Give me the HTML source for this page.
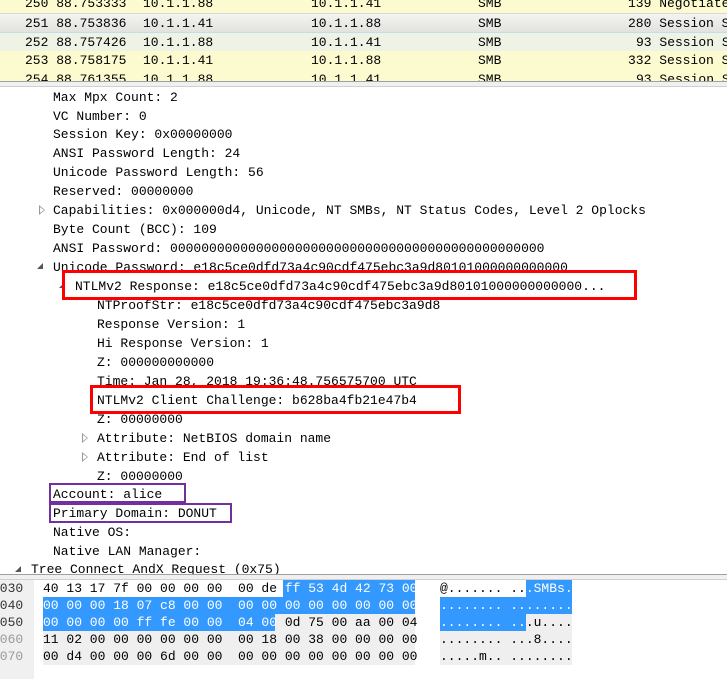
<!DOCTYPE html>
<html><head><meta charset="utf-8"><style>
body{margin:0;width:727px;height:679px;overflow:hidden;background:#fff;font-family:"Liberation Mono",monospace;font-size:13px;color:#000;position:relative}
.r{position:absolute;left:0;width:727px;height:19px;line-height:19px;white-space:pre}
.r span{position:absolute;top:0}
.t{position:absolute;white-space:pre;line-height:19px;height:19px}
.ar{position:absolute;width:0;height:0}
.open{border-left:6px solid transparent;border-bottom:6px solid #555;}
.cl{position:absolute;width:0;height:0;border-top:5px solid transparent;border-bottom:5px solid transparent;border-left:6px solid #999}
.cl:after{content:"";position:absolute;left:-5px;top:-3px;border-top:3px solid transparent;border-bottom:3px solid transparent;border-left:4px solid #fff}
.h{position:absolute;white-space:pre;height:17px;line-height:17px}
.box{position:absolute;box-sizing:border-box}
</style></head><body>
<div class="r" style="top:-6px;background:#fbfbcf"><span style="left:25px">250 88.753333</span><span style="left:143px">10.1.1.88</span><span style="left:311px">10.1.1.41</span><span style="left:478px">SMB</span><span style="left:628px">139 Negotiate</span></div>
<div class="r" style="top:13px;height:18px;background:linear-gradient(#f4f4f2,#e2e2de);border-top:1px solid #d8d8d8"><span style="left:25px">251 88.753836</span><span style="left:143px">10.1.1.41</span><span style="left:311px">10.1.1.88</span><span style="left:478px">SMB</span><span style="left:628px">280 Session S</span></div>
<div class="r" style="top:32px;background:#eef3e6;border-top:1px solid #c8dbe8"><span style="left:25px">252 88.757426</span><span style="left:143px">10.1.1.88</span><span style="left:311px">10.1.1.41</span><span style="left:478px">SMB</span><span style="left:636px">93 Session S</span></div>
<div class="r" style="top:51px;background:#fbfbcf"><span style="left:25px">253 88.758175</span><span style="left:143px">10.1.1.41</span><span style="left:311px">10.1.1.88</span><span style="left:478px">SMB</span><span style="left:628px">332 Session S</span></div>
<div class="r" style="top:70px;height:11px;overflow:hidden;background:#fbfbcf"><span style="left:25px">254 88.761355</span><span style="left:143px">10.1.1.88</span><span style="left:311px">10.1.1.41</span><span style="left:478px">SMB</span><span style="left:636px">93 Session S</span></div>
<div style="position:absolute;top:81px;left:0;width:727px;height:4px;background:#f0f0f0;border-top:1px solid #a0a0a0;border-bottom:1px solid #d0d0d0"></div>

<div class="t" style="left:53px;top:88px">Max Mpx Count: 2</div>
<div class="t" style="left:53px;top:107px">VC Number: 0</div>
<div class="t" style="left:53px;top:125px">Session Key: 0x00000000</div>
<div class="t" style="left:53px;top:144px">ANSI Password Length: 24</div>
<div class="t" style="left:53px;top:163px">Unicode Password Length: 56</div>
<div class="t" style="left:53px;top:182px">Reserved: 00000000</div>
<div class="cl" style="left:39px;top:205px"></div>
<div class="t" style="left:53px;top:201px">Capabilities: 0x000000d4, Unicode, NT SMBs, NT Status Codes, Level 2 Oplocks</div>
<div class="t" style="left:53px;top:220px">Byte Count (BCC): 109</div>
<div class="t" style="left:53px;top:239px">ANSI Password: 000000000000000000000000000000000000000000000000</div>
<div class="ar open" style="left:37px;top:263px"></div>
<div class="t" style="left:53px;top:258px">Unicode Password: e18c5ce0dfd73a4c90cdf475ebc3a9d80101000000000000</div>
<div class="ar open" style="left:59px;top:282px"></div>
<div class="t" style="left:75px;top:277px">NTLMv2 Response: e18c5ce0dfd73a4c90cdf475ebc3a9d80101000000000000...</div>
<div class="t" style="left:97px;top:296px">NTProofStr: e18c5ce0dfd73a4c90cdf475ebc3a9d8</div>
<div class="t" style="left:97px;top:315px">Response Version: 1</div>
<div class="t" style="left:97px;top:334px">Hi Response Version: 1</div>
<div class="t" style="left:97px;top:353px">Z: 000000000000</div>
<div class="t" style="left:97px;top:372px">Time: Jan 28, 2018 19:36:48.756575700 UTC</div>
<div class="t" style="left:97px;top:391px">NTLMv2 Client Challenge: b628ba4fb21e47b4</div>
<div class="t" style="left:97px;top:410px">Z: 00000000</div>
<div class="cl" style="left:82px;top:433px"></div>
<div class="t" style="left:97px;top:429px">Attribute: NetBIOS domain name</div>
<div class="cl" style="left:82px;top:452px"></div>
<div class="t" style="left:97px;top:448px">Attribute: End of list</div>
<div class="t" style="left:97px;top:467px">Z: 00000000</div>
<div class="t" style="left:53px;top:485px">Account: alice</div>
<div class="t" style="left:53px;top:504px">Primary Domain: DONUT</div>
<div class="t" style="left:53px;top:523px">Native OS:</div>
<div class="t" style="left:53px;top:542px">Native LAN Manager:</div>
<div class="ar open" style="left:15px;top:566px"></div>
<div class="t" style="left:31px;top:560px;height:14px;overflow:hidden">Tree Connect AndX Request (0x75)</div>
<div style="position:absolute;top:574px;left:0;width:727px;height:4px;background:#f0f0f0;border-top:1px solid #a0a0a0;border-bottom:1px solid #d0d0d0"></div>

<div class="box" style="left:62px;top:270px;width:575px;height:30px;border:3px solid #f00"></div>
<div class="box" style="left:90px;top:385px;width:371px;height:29px;border:3px solid #f00"></div>
<div class="box" style="left:49px;top:483px;width:137px;height:20px;border:2px solid #7030a0"></div>
<div class="box" style="left:49px;top:503px;width:183px;height:20px;border:2px solid #7030a0"></div>

<div style="position:absolute;left:0;top:580px;width:34px;height:99px;background:#f0f0f0"></div>
<div style="position:absolute;left:43px;top:597px;width:372px;height:68px;background:#efefef"></div>
<div style="position:absolute;left:440px;top:597px;width:132px;height:68px;background:#efefef"></div>
<div style="position:absolute;left:283px;top:580px;width:132px;height:17px;background:#3399ff"></div>
<div style="position:absolute;left:43px;top:597px;width:372px;height:17px;background:#3399ff"></div>
<div style="position:absolute;left:43px;top:614px;width:232px;height:17px;background:#3399ff"></div>
<div style="position:absolute;left:526px;top:580px;width:46px;height:17px;background:#3399ff"></div>
<div style="position:absolute;left:440px;top:597px;width:132px;height:17px;background:#3399ff"></div>
<div style="position:absolute;left:440px;top:614px;width:86px;height:17px;background:#3399ff"></div>

<div class="h" style="left:-8px;top:580px;color:#333">0030</div>
<div class="h" style="left:-8px;top:597px;color:#333">0040</div>
<div class="h" style="left:-8px;top:614px;color:#333">0050</div>
<div class="h" style="left:-8px;top:631px;color:#999">0060</div>
<div class="h" style="left:-8px;top:648px;color:#999">0070</div>

<div class="h" style="left:43px;top:580px">40 13 17 7f 00 00 00 00  00 de <span style="color:#fff">ff 53 4d 42 73 00</span></div>
<div class="h" style="left:43px;top:597px;color:#fff">00 00 00 18 07 c8 00 00  00 00 00 00 00 00 00 00</div>
<div class="h" style="left:43px;top:614px"><span style="color:#fff">00 00 00 00 ff fe 00 00  04 00</span> 0d 75 00 aa 00 04</div>
<div class="h" style="left:43px;top:631px">11 02 00 00 00 00 00 00  00 18 00 38 00 00 00 00</div>
<div class="h" style="left:43px;top:648px">00 d4 00 00 00 6d 00 00  00 00 00 00 00 00 00 00</div>

<div class="h" style="left:440px;top:580px">@....... ..<span style="color:#fff">.SMBs.</span></div>
<div class="h" style="left:440px;top:597px;color:#fff">........ ........</div>
<div class="h" style="left:440px;top:614px"><span style="color:#fff">........ ..</span>.u....</div>
<div class="h" style="left:440px;top:631px">........ ...8....</div>
<div class="h" style="left:440px;top:648px">.....m.. ........</div>
</body></html>
